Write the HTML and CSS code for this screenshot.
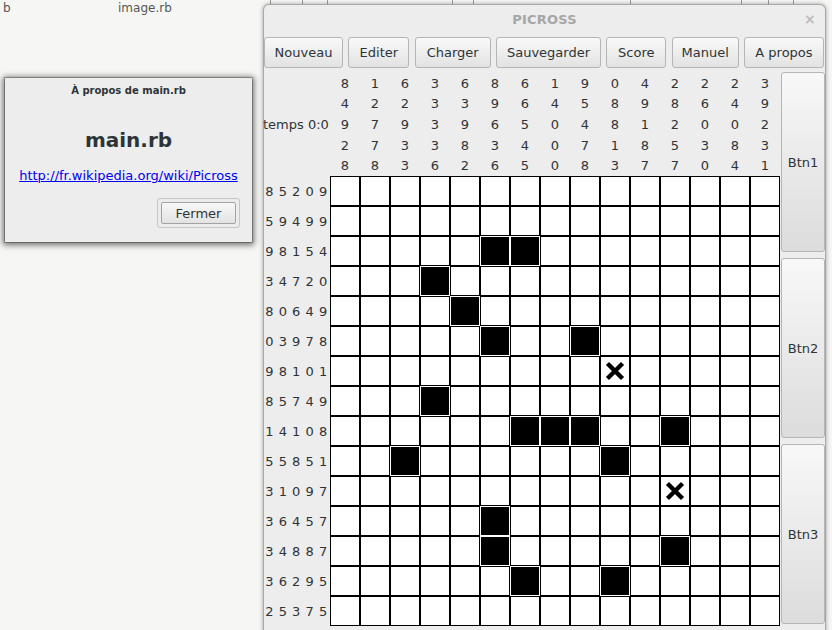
FILE: index.html
```html
<!DOCTYPE html>
<html lang="fr">
<head>
<meta charset="utf-8">
<title>PICROSS</title>
<link rel="stylesheet" href="styles.css">
</head>
<body>
<div class="desk-labels"><span class="desk-label first">b</span><span class="desk-label">image.rb</span></div>
<svg class="desk-ticks" width="832" height="6" viewBox="0 0 832 6">
  <g stroke="#9a9a9a" stroke-width="1">
    <line x1="270.5" y1="0" x2="270.5" y2="4"/>
    <line x1="302.5" y1="0" x2="302.5" y2="4"/>
    <line x1="327.5" y1="0" x2="327.5" y2="4"/>
    <line x1="452.5" y1="0" x2="452.5" y2="4"/>
    <line x1="473.5" y1="0" x2="473.5" y2="4"/>
    <line x1="630.5" y1="0" x2="630.5" y2="4"/>
    <line x1="741.5" y1="0" x2="741.5" y2="4"/>
    <line x1="768.5" y1="0" x2="768.5" y2="4"/>
    <line x1="793.5" y1="0" x2="793.5" y2="4"/>
  </g>
</svg>

<div class="window">
  <div class="titlebar">PICROSS<span class="close">×</span></div>
  <div class="toolbar">
    <button class="btn">Nouveau</button>
    <button class="btn">Editer</button>
    <button class="btn">Charger</button>
    <button class="btn">Sauvegarder</button>
    <button class="btn">Score</button>
    <button class="btn">Manuel</button>
    <button class="btn">A propos</button>
  </div>
  <div class="main">
    <div class="temps">temps 0:0</div>
    <div class="colclues">
      <span>8</span><span>1</span><span>6</span><span>3</span><span>6</span><span>8</span><span>6</span><span>1</span><span>9</span><span>0</span><span>4</span><span>2</span><span>2</span><span>2</span><span>3</span>
      <span>4</span><span>2</span><span>2</span><span>3</span><span>3</span><span>9</span><span>6</span><span>4</span><span>5</span><span>8</span><span>9</span><span>8</span><span>6</span><span>4</span><span>9</span>
      <span>9</span><span>7</span><span>9</span><span>3</span><span>9</span><span>6</span><span>5</span><span>0</span><span>4</span><span>8</span><span>1</span><span>2</span><span>0</span><span>0</span><span>2</span>
      <span>2</span><span>7</span><span>3</span><span>3</span><span>8</span><span>3</span><span>4</span><span>0</span><span>7</span><span>1</span><span>8</span><span>5</span><span>3</span><span>8</span><span>3</span>
      <span>8</span><span>8</span><span>3</span><span>6</span><span>2</span><span>6</span><span>5</span><span>0</span><span>8</span><span>3</span><span>7</span><span>7</span><span>0</span><span>4</span><span>1</span>
    </div>
    <div class="rowclues">
      <span>8 5 2 0 9</span>
      <span>5 9 4 9 9</span>
      <span>9 8 1 5 4</span>
      <span>3 4 7 2 0</span>
      <span>8 0 6 4 9</span>
      <span>0 3 9 7 8</span>
      <span>9 8 1 0 1</span>
      <span>8 5 7 4 9</span>
      <span>1 4 1 0 8</span>
      <span>5 5 8 5 1</span>
      <span>3 1 0 9 7</span>
      <span>3 6 4 5 7</span>
      <span>3 4 8 8 7</span>
      <span>3 6 2 9 5</span>
      <span>2 5 3 7 5</span>
    </div>
    <div class="board">
      <i class="c"></i><i class="c"></i><i class="c"></i><i class="c"></i><i class="c"></i><i class="c"></i><i class="c"></i><i class="c"></i><i class="c"></i><i class="c"></i><i class="c"></i><i class="c"></i><i class="c"></i><i class="c"></i><i class="c"></i>
      <i class="c"></i><i class="c"></i><i class="c"></i><i class="c"></i><i class="c"></i><i class="c"></i><i class="c"></i><i class="c"></i><i class="c"></i><i class="c"></i><i class="c"></i><i class="c"></i><i class="c"></i><i class="c"></i><i class="c"></i>
      <i class="c"></i><i class="c"></i><i class="c"></i><i class="c"></i><i class="c"></i><i class="c f"></i><i class="c f"></i><i class="c"></i><i class="c"></i><i class="c"></i><i class="c"></i><i class="c"></i><i class="c"></i><i class="c"></i><i class="c"></i>
      <i class="c"></i><i class="c"></i><i class="c"></i><i class="c f"></i><i class="c"></i><i class="c"></i><i class="c"></i><i class="c"></i><i class="c"></i><i class="c"></i><i class="c"></i><i class="c"></i><i class="c"></i><i class="c"></i><i class="c"></i>
      <i class="c"></i><i class="c"></i><i class="c"></i><i class="c"></i><i class="c f"></i><i class="c"></i><i class="c"></i><i class="c"></i><i class="c"></i><i class="c"></i><i class="c"></i><i class="c"></i><i class="c"></i><i class="c"></i><i class="c"></i>
      <i class="c"></i><i class="c"></i><i class="c"></i><i class="c"></i><i class="c"></i><i class="c f"></i><i class="c"></i><i class="c"></i><i class="c f"></i><i class="c"></i><i class="c"></i><i class="c"></i><i class="c"></i><i class="c"></i><i class="c"></i>
      <i class="c"></i><i class="c"></i><i class="c"></i><i class="c"></i><i class="c"></i><i class="c"></i><i class="c"></i><i class="c"></i><i class="c"></i><i class="c x"><svg viewBox="0 0 28 28"><path d="M8 8L20 20M20 8L8 20"/></svg></i><i class="c"></i><i class="c"></i><i class="c"></i><i class="c"></i><i class="c"></i>
      <i class="c"></i><i class="c"></i><i class="c"></i><i class="c f"></i><i class="c"></i><i class="c"></i><i class="c"></i><i class="c"></i><i class="c"></i><i class="c"></i><i class="c"></i><i class="c"></i><i class="c"></i><i class="c"></i><i class="c"></i>
      <i class="c"></i><i class="c"></i><i class="c"></i><i class="c"></i><i class="c"></i><i class="c"></i><i class="c f"></i><i class="c f"></i><i class="c f"></i><i class="c"></i><i class="c"></i><i class="c f"></i><i class="c"></i><i class="c"></i><i class="c"></i>
      <i class="c"></i><i class="c"></i><i class="c f"></i><i class="c"></i><i class="c"></i><i class="c"></i><i class="c"></i><i class="c"></i><i class="c"></i><i class="c f"></i><i class="c"></i><i class="c"></i><i class="c"></i><i class="c"></i><i class="c"></i>
      <i class="c"></i><i class="c"></i><i class="c"></i><i class="c"></i><i class="c"></i><i class="c"></i><i class="c"></i><i class="c"></i><i class="c"></i><i class="c"></i><i class="c"></i><i class="c x"><svg viewBox="0 0 28 28"><path d="M8 8L20 20M20 8L8 20"/></svg></i><i class="c"></i><i class="c"></i><i class="c"></i>
      <i class="c"></i><i class="c"></i><i class="c"></i><i class="c"></i><i class="c"></i><i class="c f"></i><i class="c"></i><i class="c"></i><i class="c"></i><i class="c"></i><i class="c"></i><i class="c"></i><i class="c"></i><i class="c"></i><i class="c"></i>
      <i class="c"></i><i class="c"></i><i class="c"></i><i class="c"></i><i class="c"></i><i class="c f"></i><i class="c"></i><i class="c"></i><i class="c"></i><i class="c"></i><i class="c"></i><i class="c f"></i><i class="c"></i><i class="c"></i><i class="c"></i>
      <i class="c"></i><i class="c"></i><i class="c"></i><i class="c"></i><i class="c"></i><i class="c"></i><i class="c f"></i><i class="c"></i><i class="c"></i><i class="c f"></i><i class="c"></i><i class="c"></i><i class="c"></i><i class="c"></i><i class="c"></i>
      <i class="c"></i><i class="c"></i><i class="c"></i><i class="c"></i><i class="c"></i><i class="c"></i><i class="c"></i><i class="c"></i><i class="c"></i><i class="c"></i><i class="c"></i><i class="c"></i><i class="c"></i><i class="c"></i><i class="c"></i>
    </div>
    <div class="side">
      <button class="side-btn">Btn1</button>
      <button class="side-btn">Btn2</button>
      <button class="side-btn">Btn3</button>
    </div>
  </div>
</div>

<div class="dialog">
  <div class="dlg-title">À propos de main.rb</div>
  <div class="dlg-name">main.rb</div>
  <a class="dlg-link" href="#">http://fr.wikipedia.org/wiki/Picross</a>
  <div class="dlg-actions">
    <button class="dlg-btn"><span class="dlg-btn-inner">Fermer</span></button>
  </div>
</div>
</body>
</html>
```

FILE: styles.css
```css
* { box-sizing: border-box; }

html, body { margin: 0; padding: 0; }

body {
  width: 832px;
  height: 630px;
  overflow: hidden;
  position: relative;
  background: #f6f6f5;
  font-family: "DejaVu Sans", sans-serif;
  color: #2e3436;
}

.desk-labels {
  display: flex;
  padding: 1px 0 0 3px;
  font-size: 12px;
  line-height: 14px;
  color: #555753;
}
.desk-label.first { width: 115px; }

.desk-ticks { position: absolute; top: 0; left: 0; }

/* main window */
.window {
  position: absolute;
  left: 263px;
  top: 4px;
  width: 563px;
  height: 640px;
  background: #ededed;
  border: 1px solid #a8a8a8;
  border-bottom: none;
  border-radius: 6px 6px 0 0;
  box-shadow: 0 0 4px rgba(0, 0, 0, 0.35);
}

.titlebar {
  position: relative;
  height: 28px;
  display: flex;
  align-items: center;
  justify-content: center;
  font-size: 13px;
  font-weight: bold;
  color: #a6a6a6;
  letter-spacing: 0.2px;
}
.close {
  position: absolute;
  right: 9px;
  top: 6px;
  font-size: 14px;
  color: #bcbcbc;
}

.toolbar {
  display: grid;
  grid-template-columns: 79px 61px 76px 105px 60px 67px 80px;
  justify-content: space-between;
  padding: 4px 1px 0 0;
}

.btn {
  height: 31px;
  padding: 0;
  border: 1px solid #b5b5b5;
  border-radius: 3px;
  background: linear-gradient(#f9f9f9, #e2e2e2);
  font-family: "DejaVu Sans", sans-serif;
  font-size: 13px;
  color: #2e3436;
}

.main {
  display: grid;
  grid-template-columns: 65px 450px 44px;
  grid-template-rows: 104px 450px;
  column-gap: 1px;
  margin-top: 4px;
}

.temps {
  grid-column: 1;
  grid-row: 1;
  display: flex;
  align-items: center;
  margin-left: -1px;
  padding-top: 1px;
  font-size: 13px;
  white-space: nowrap;
  color: #2e3436;
}

.colclues {
  grid-column: 2;
  grid-row: 1;
  display: grid;
  grid-template-columns: repeat(15, 30px);
  grid-auto-rows: 20.6px;
  align-items: center;
  padding-top: 1px;
  text-align: center;
  font-size: 13px;
  color: #2e3436;
}

.rowclues {
  grid-column: 1;
  grid-row: 2;
  display: grid;
  grid-auto-rows: 30px;
  align-items: center;
  text-align: center;
  font-size: 13px;
  letter-spacing: 0.5px;
  white-space: nowrap;
  color: #2e3436;
}

.board {
  grid-column: 2;
  grid-row: 2;
  display: grid;
  grid-template-columns: repeat(15, 30px);
  grid-auto-rows: 30px;
}

.c {
  display: block;
  border: 1px solid #000;
  background: #fff;
}
.c.f {
  background: #000;
  border-color: #fff;
}
.c.x svg {
  display: block;
  width: 28px;
  height: 28px;
  fill: none;
  stroke: #000;
  stroke-width: 4.4;
  stroke-linecap: square;
}

.side {
  grid-column: 3;
  grid-row: 1 / span 2;
  display: flex;
  flex-direction: column;
  gap: 6px;
}

.side-btn {
  height: 180px;
  padding: 0;
  border: 1px solid #b5b5b5;
  border-radius: 3px;
  background: linear-gradient(#f8f8f8, #dcdcdc);
  font-family: "DejaVu Sans", sans-serif;
  font-size: 13px;
  color: #2e3436;
}

/* about dialog */
.dialog {
  position: absolute;
  left: 5px;
  top: 78px;
  width: 247px;
  height: 164px;
  display: flex;
  flex-direction: column;
  align-items: center;
  padding: 6px 12px 0 12px;
  background: #ededed;
  box-shadow: 0 0 0 1px rgba(0, 0, 0, 0.25), 0 1px 6px 2px rgba(0, 0, 0, 0.55);
}

.dlg-title {
  font-size: 10px;
  line-height: 14px;
  font-weight: bold;
  color: #2e3436;
  margin-bottom: 30px;
}

.dlg-name {
  font-size: 20px;
  line-height: 24px;
  font-weight: bold;
  color: #2e3436;
  margin-bottom: 16px;
}

.dlg-link {
  font-size: 13px;
  line-height: 16px;
  color: #0000ee;
  text-decoration: underline;
  margin-bottom: 14px;
  white-space: nowrap;
}

.dlg-actions {
  align-self: stretch;
  display: flex;
  justify-content: flex-end;
}

.dlg-btn {
  width: 83px;
  height: 30px;
  padding: 3px;
  border: 1px solid #c6c6c6;
  border-radius: 3px;
  background: #ececec;
  font-family: "DejaVu Sans", sans-serif;
}
.dlg-btn-inner {
  display: flex;
  height: 100%;
  align-items: center;
  justify-content: center;
  border: 1px solid #a2a2a2;
  border-radius: 2px;
  background: linear-gradient(#f7f7f7, #e3e3e3);
  font-size: 13px;
  color: #2e3436;
}
```
